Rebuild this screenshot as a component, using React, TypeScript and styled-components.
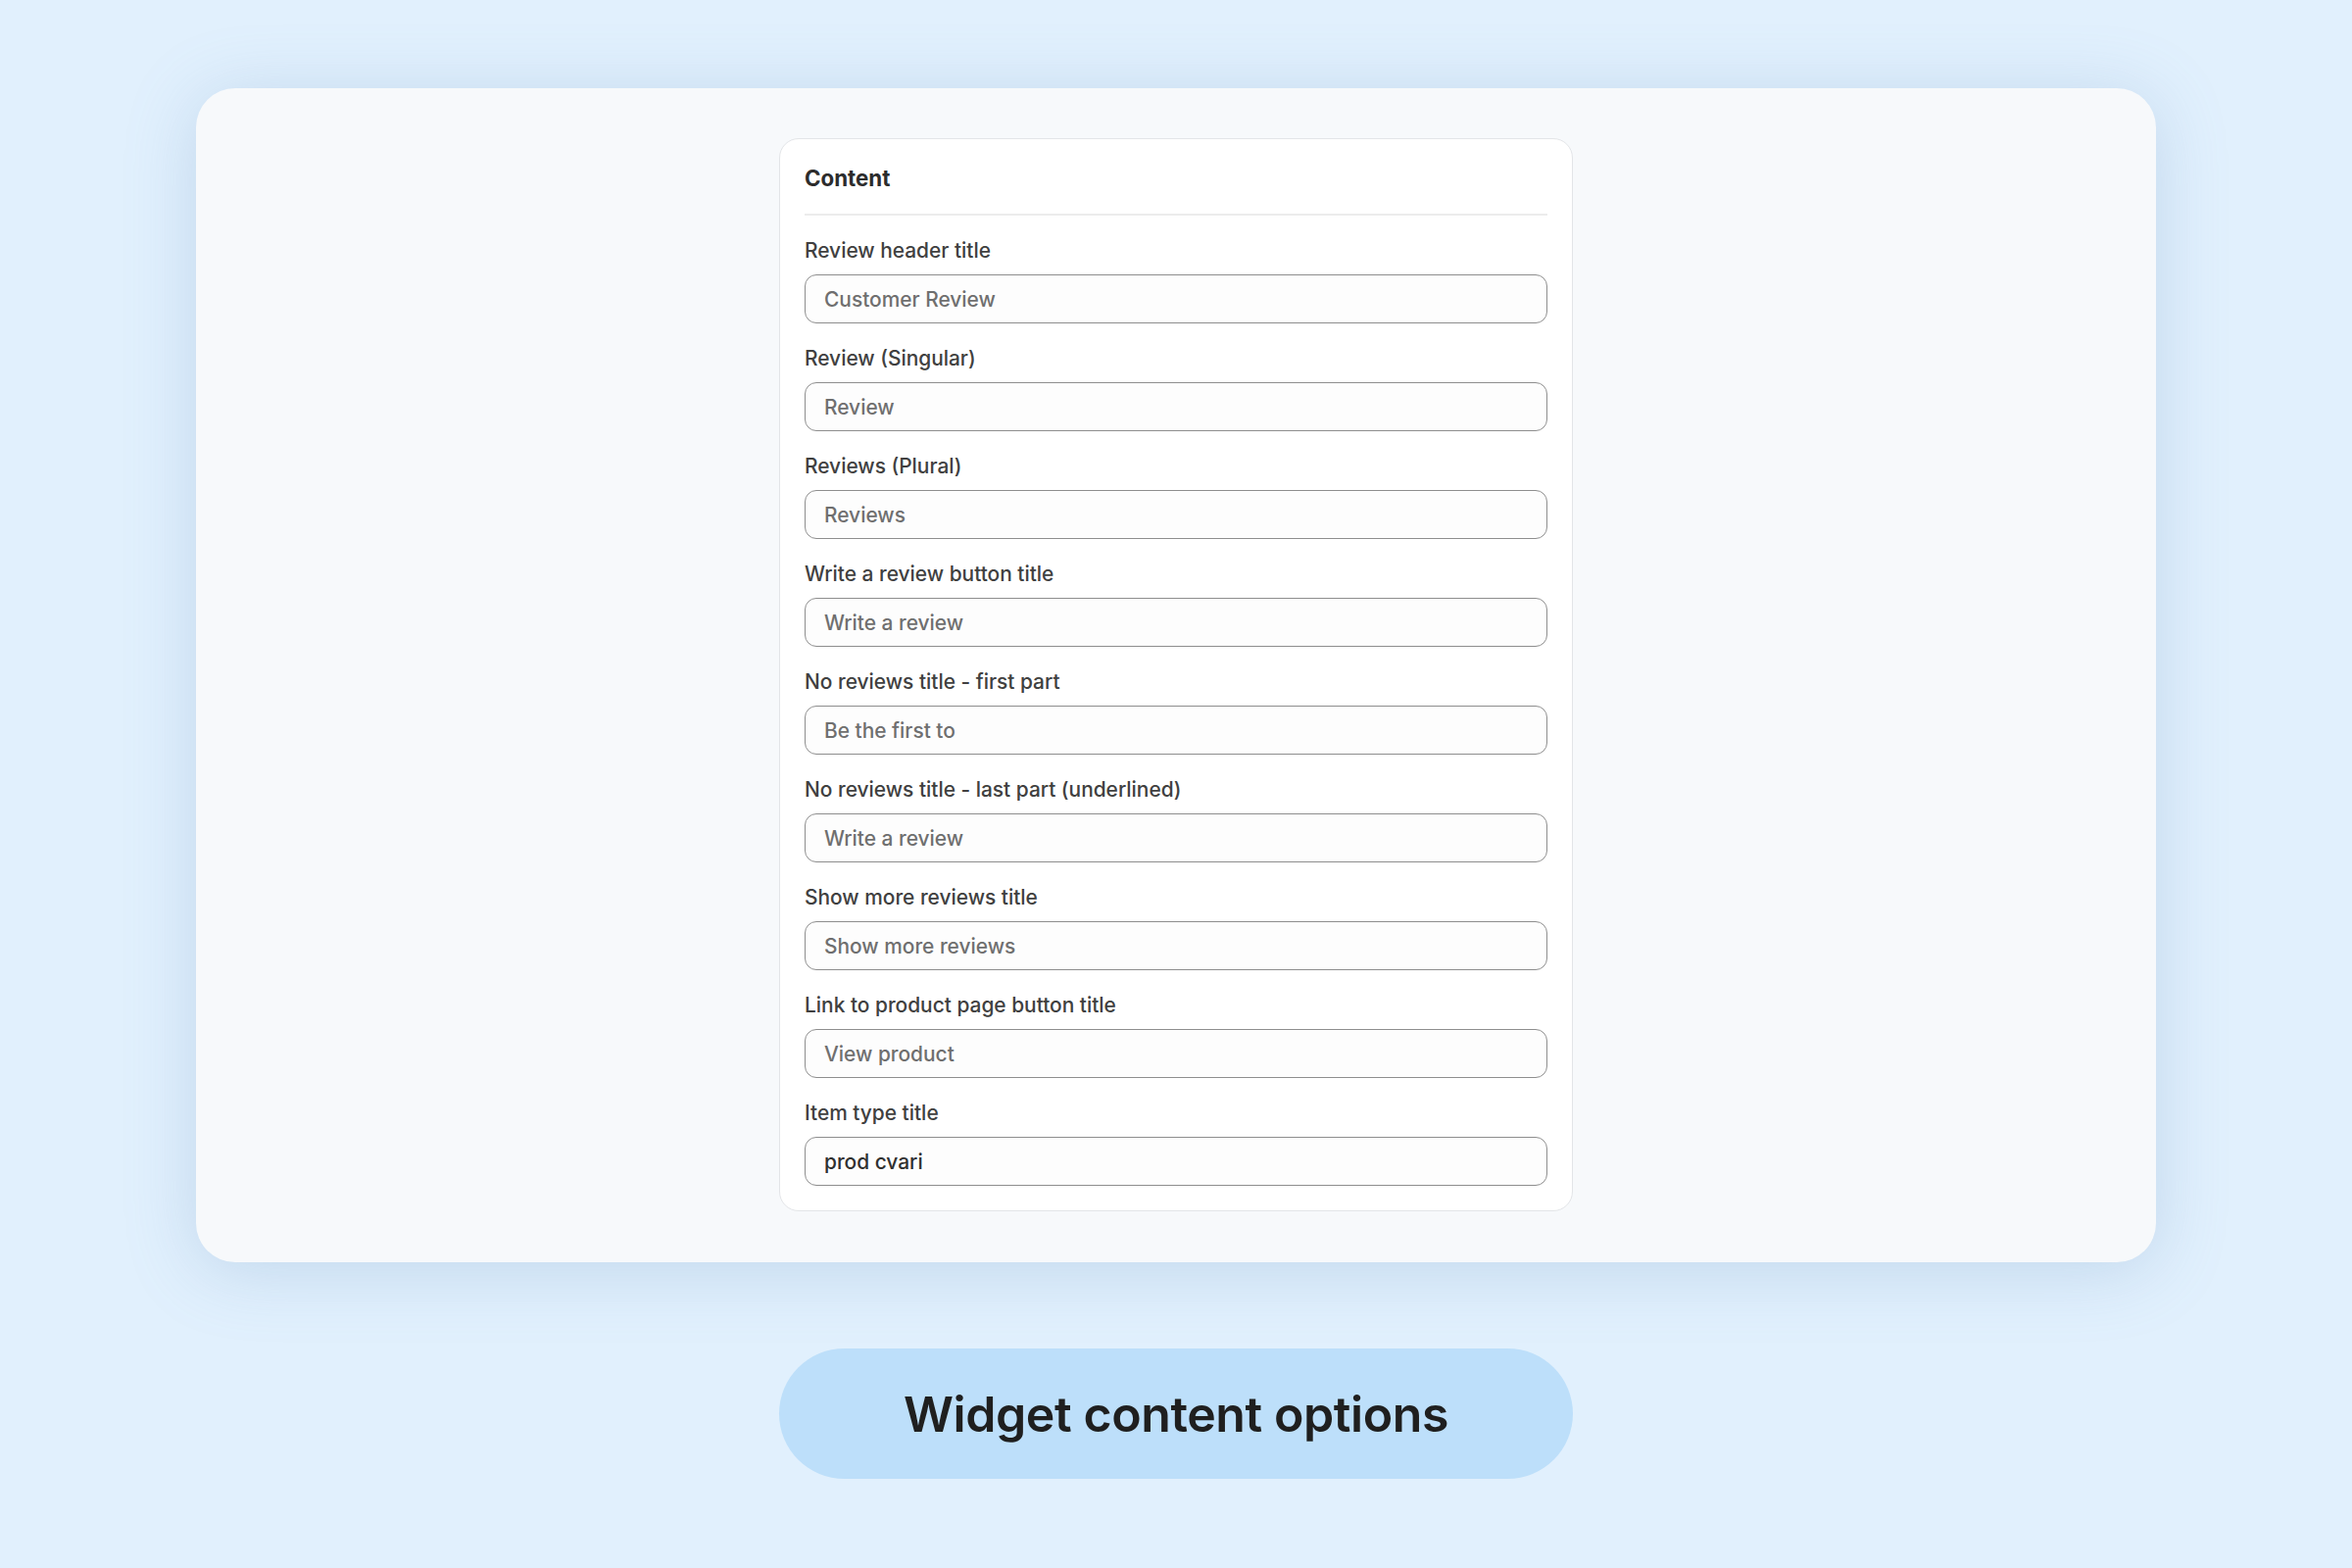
import React from "react";
import styled, { createGlobalStyle } from "styled-components";

const GlobalStyle = createGlobalStyle`
  html, body {
    margin: 0;
    padding: 0;
    background: #e1f0fd;
  }
  body {
    font-family: Inter, "Noto Sans", "Liberation Sans", sans-serif;
    -webkit-font-smoothing: antialiased;
  }
  * { box-sizing: border-box; }
`;

const Page = styled.div`
  min-height: 1600px;
  display: flex;
  flex-direction: column;
  align-items: center;
  padding-top: 90px;
  background: #e1f0fd;
`;

const Stage = styled.div`
  width: 2000px;
  padding: 51px 0 52px;
  background: #f7f9fb;
  border-radius: 40px;
  box-shadow: 0 8px 70px rgba(110, 150, 195, 0.28);
  display: flex;
  justify-content: center;
`;

const Panel = styled.section`
  width: 810px;
  background: #ffffff;
  border: 1px solid #e3e5e8;
  border-radius: 20px;
  padding: 26px 25px 25px;
  display: flex;
  flex-direction: column;
`;

const Heading = styled.h2`
  margin: 0;
  font-size: 22.3px;
  line-height: 28px;
  font-weight: 650;
  color: #2c2c2c;
`;

const Divider = styled.hr`
  margin: 22px 0 24px;
  border: none;
  height: 2px;
  background: #ececec;
`;

const Fields = styled.div`
  display: flex;
  flex-direction: column;
  gap: 24px;
`;

const Field = styled.label`
  display: flex;
  flex-direction: column;
  gap: 12px;
`;

const LabelText = styled.span`
  font-size: 20.9px;
  line-height: 24px;
  font-weight: 450;
  color: #404040;
`;

const TextInput = styled.input<{ $filled?: boolean }>`
  height: 50px;
  width: 100%;
  border: 1.5px solid #8e8e8e;
  border-radius: 12px;
  background: #fdfdfd;
  padding: 0 19px;
  font-family: Inter, "Noto Sans", "Liberation Sans", sans-serif;
  font-size: 20.9px;
  font-weight: 450;
  color: #303030;
  outline: none;
  &::placeholder {
    color: #6f6f6f;
    opacity: 1;
  }
`;

const Caption = styled.div`
  margin-top: 88px;
  width: 810px;
  height: 133px;
  border-radius: 67px;
  background: #bddffa;
  display: flex;
  align-items: center;
  justify-content: center;
  font-family: Inter, "Noto Sans", "Liberation Sans", sans-serif;
  font-size: 50px;
  font-weight: 600;
  letter-spacing: -0.4px;
  color: #1f1f1f;
`;

const fields: { label: string; placeholder?: string; value?: string }[] = [
  { label: "Review header title", placeholder: "Customer Review" },
  { label: "Review (Singular)", placeholder: "Review" },
  { label: "Reviews (Plural)", placeholder: "Reviews" },
  { label: "Write a review button title", placeholder: "Write a review" },
  { label: "No reviews title - first part", placeholder: "Be the first to" },
  { label: "No reviews title - last part (underlined)", placeholder: "Write a review" },
  { label: "Show more reviews title", placeholder: "Show more reviews" },
  { label: "Link to product page button title", placeholder: "View product" },
  { label: "Item type title", value: "prod cvari" },
];

export default function App() {
  return (
    <>
      <GlobalStyle />
      <Page>
        <Stage>
          <Panel>
            <Heading>Content</Heading>
            <Divider />
            <Fields>
              {fields.map((f) => (
                <Field key={f.label}>
                  <LabelText>{f.label}</LabelText>
                  <TextInput
                    type="text"
                    placeholder={f.placeholder}
                    defaultValue={f.value}
                    $filled={!!f.value}
                  />
                </Field>
              ))}
            </Fields>
          </Panel>
        </Stage>
        <Caption>Widget content options</Caption>
      </Page>
    </>
  );
}
